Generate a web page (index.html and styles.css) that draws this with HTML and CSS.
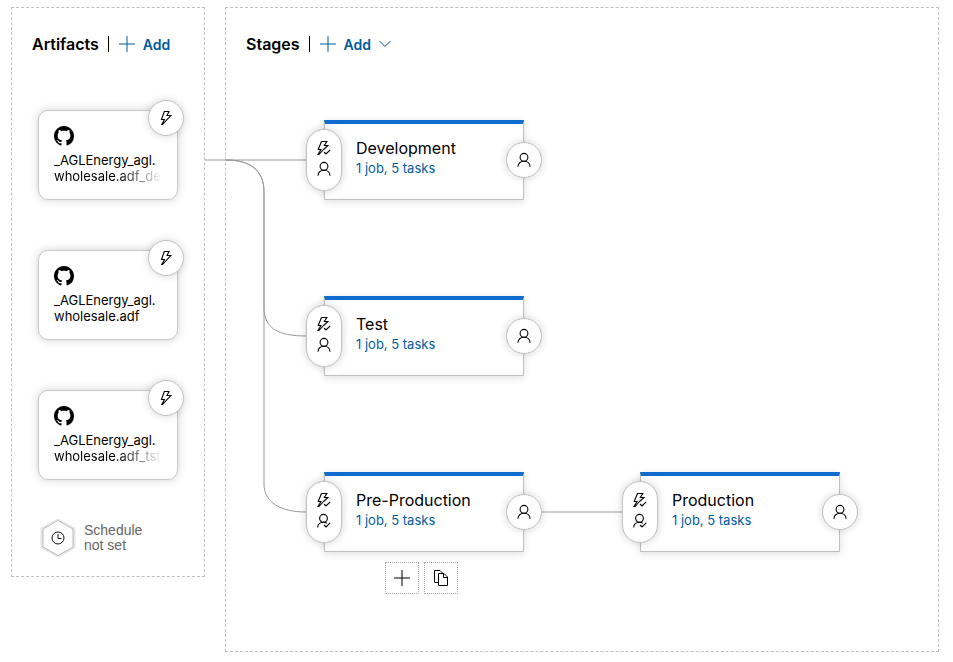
FILE: index.html
```html
<!DOCTYPE html>
<html lang="en">
<head>
<meta charset="utf-8">
<title>Release pipeline</title>
<link rel="stylesheet" href="styles.css">
</head>
<body>
<svg class="defs" aria-hidden="true">
  <symbol id="plus" viewBox="0 0 16 16"><path d="M8 0v16M0 8h16"/></symbol>
  <symbol id="bolt" viewBox="0 0 16 16"><path d="M6.300 1.500H11L9 5.500H12.800L4.500 14.500H3.800L6.500 9.500H3.500z"/></symbol>
  <symbol id="bolt-check" viewBox="0 0 16 16"><path d="M7.500 9.500L12 5.500H8.300L10.800 1.500H5.500L2.200 9.500H5L2 14.500H3L7.500 9.500M8 12l2 2 4.200-4.200"/></symbol>
  <symbol id="person" viewBox="0 0 16 16"><circle cx="8" cy="5.300" r="3.900"/><path d="M2 14.800c0-3.300 2.500-5.600 6-5.600s6 2.300 6 5.600"/></symbol>
  <symbol id="person-check" viewBox="0 0 16 16"><circle cx="7.500" cy="5.300" r="3.900"/><path d="M1.700 14.500c0-3 2.300-5.300 5.800-5.300 1.500 0 2.500.5 3.300 1M8 12l2 2 4.200-4.200"/></symbol>
  <symbol id="github" viewBox="0 0 16 16"><path d="M8 0C3.580 0 0 3.580 0 8c0 3.540 2.290 6.530 5.470 7.590.4.070.55-.17.55-.38 0-.19-.01-.82-.01-1.490-2.010.37-2.530-.49-2.690-.94-.09-.23-.48-.94-.82-1.130-.28-.15-.68-.52-.01-.53.63-.01 1.080.58 1.230.82.72 1.210 1.870.87 2.330.66.07-.52.28-.87.51-1.070-1.780-.2-3.640-.89-3.640-3.950 0-.87.31-1.590.82-2.150-.08-.2-.36-1.020.08-2.120 0 0 .67-.21 2.200.82.64-.18 1.320-.27 2-.27s1.360.09 2 .27c1.530-1.040 2.200-.82 2.200-.82.44 1.100.16 1.920.08 2.120.51.56.82 1.270.82 2.150 0 3.070-1.870 3.750-3.650 3.950.29.25.54.73.54 1.480 0 1.070-.01 1.930-.01 2.200 0 .21.15.46.55.38A8.010 8.010 0 0 0 16 8c0-4.420-3.580-8-8-8z"/></symbol>
</svg>
<main class="pipeline">
  <section class="panel artifacts">
    <header class="panel-header">
      <h2>Artifacts</h2>
      <button class="add"><svg class="icon"><use href="#plus"/></svg>Add</button>
    </header>
    <div class="artifact-list">
      <article class="artifact">
        <svg class="logo"><use href="#github"/></svg>
        <p>_AGLEnergy_agl.</p>
        <p class="fade">wholesale.adf_dev</p>
        <button class="round trigger" aria-label="Continuous deployment trigger"><svg class="icon"><use href="#bolt"/></svg></button>
      </article>
      <article class="artifact">
        <svg class="logo"><use href="#github"/></svg>
        <p>_AGLEnergy_agl.</p>
        <p>wholesale.adf</p>
        <button class="round trigger" aria-label="Continuous deployment trigger"><svg class="icon"><use href="#bolt"/></svg></button>
      </article>
      <article class="artifact">
        <svg class="logo"><use href="#github"/></svg>
        <p>_AGLEnergy_agl.</p>
        <p class="fade">wholesale.adf_tst</p>
        <button class="round trigger" aria-label="Continuous deployment trigger"><svg class="icon"><use href="#bolt"/></svg></button>
      </article>
    </div>
    <button class="schedule">
      <svg class="hexagon" viewBox="0 0 36 40">
        <path class="halo" d="M18 2L34 11V29L18 38L2 29V11z"/>
        <path class="edge" d="M18 2.500L33 11V29L18 37.500L3 29V11z"/>
        <circle cx="18" cy="20" r="6"/>
        <path d="M18 16v4.500h3.500"/>
      </svg>
      <span>Schedule<br>not set</span>
    </button>
  </section>

  <section class="panel stages">
    <svg class="connectors" aria-hidden="true">
      <path d="M0 152H110M21 152C45 152 59 162 59 184V300C59 320 73 328 101 328"/>
      <path d="M21 152C45 152 59 162 59 184V476C59 494 75 504 101 504M330 504H420"/>
    </svg>
    <header class="panel-header">
      <h2>Stages</h2>
      <button class="add"><svg class="icon"><use href="#plus"/></svg>Add<svg class="chevron" viewBox="0 0 12 8"><path d="M.5 1L6 6.500 11.500 1"/></svg></button>
    </header>
    <div class="stage-grid">
      <article class="stage first">
        <h3>Development</h3><a href="#">1 job, 5 tasks</a>
        <button class="pill" aria-label="Pre-deployment conditions"><svg class="icon"><use href="#bolt-check"/></svg><svg class="icon"><use href="#person"/></svg></button>
        <button class="round post" aria-label="Post-deployment conditions"><svg class="icon"><use href="#person"/></svg></button>
      </article>
      <article class="stage first">
        <h3>Test</h3><a href="#">1 job, 5 tasks</a>
        <button class="pill" aria-label="Pre-deployment conditions"><svg class="icon"><use href="#bolt-check"/></svg><svg class="icon"><use href="#person"/></svg></button>
        <button class="round post" aria-label="Post-deployment conditions"><svg class="icon"><use href="#person"/></svg></button>
      </article>
      <article class="stage first">
        <h3>Pre-Production</h3><a href="#">1 job, 5 tasks</a>
        <button class="pill" aria-label="Pre-deployment conditions"><svg class="icon"><use href="#bolt-check"/></svg><svg class="icon"><use href="#person-check"/></svg></button>
        <button class="round post" aria-label="Post-deployment conditions"><svg class="icon"><use href="#person"/></svg></button>
      </article>
      <article class="stage">
        <h3>Production</h3><a href="#">1 job, 5 tasks</a>
        <button class="pill" aria-label="Pre-deployment conditions"><svg class="icon"><use href="#bolt-check"/></svg><svg class="icon"><use href="#person-check"/></svg></button>
        <button class="round post" aria-label="Post-deployment conditions"><svg class="icon"><use href="#person"/></svg></button>
      </article>
    </div>
    <div class="stage-actions">
      <button aria-label="Add stage"><svg class="icon"><use href="#plus"/></svg></button>
      <button aria-label="Clone stage"><svg class="copy" viewBox="0 0 16 18"><path d="M5 13.500H1.500V1.500H7L9.500 4M5.500 4.500H11L14.500 8V16.500H5.500zM10.500 4.500V8.500H14.500"/></svg></button>
    </div>
  </section>
</main>
</body>
</html>
```
FILE: styles.css
```css
* { box-sizing: border-box; }
body { margin: 0; background: #fff; color: #000; font-family: Inter, "Noto Sans", sans-serif; }
h2, h3, p { margin: 0; }
button { margin: 0; padding: 0; border: 0; background: none; color: inherit; font: inherit; cursor: pointer; }
svg { display: block; flex: none; fill: none; stroke: currentColor; }
.defs { position: absolute; width: 0; height: 0; }

.pipeline { display: flex; align-items: flex-start; gap: 20px; padding: 7px 14px 10px 11px; }
.panel { border: 1px dashed #c0c0c0; padding: 20px; }
.artifacts { flex: none; width: 194px; padding-bottom: 18px; }
.stages { position: relative; flex: 1; min-height: calc(100vh - 17px); }

.panel-header { display: flex; align-items: center; height: 32px; }
h2 { font-size: 16px; line-height: 16px; font-weight: 600; padding-right: 9px; border-right: 1px solid #000; }
.add { display: flex; align-items: center; gap: 8px; margin-left: 10px; color: #005a9e; font-size: 14px; font-weight: 600; }
.icon { width: 16px; height: 16px; }
.round .icon, .pill .icon { stroke-width: 1.1; }
.chevron { width: 12px; height: 8px; }

.artifact-list { display: grid; grid-template-columns: minmax(0, 1fr); gap: 50px; margin: 50px 6px 0; }
.artifact { position: relative; height: 90px; padding: 15px; border: 1px solid #c8c8c8; border-radius: 10px; background: #fff; box-shadow: 0 0 10px rgba(0, 0, 0, .18); }
.logo { width: 20px; height: 20px; margin-bottom: 6px; fill: #000; stroke: none; }
.artifact p { overflow: hidden; white-space: nowrap; font-size: 13px; line-height: 16px; }
.artifact .fade { -webkit-mask-image: linear-gradient(90deg, #000 60%, transparent); mask-image: linear-gradient(90deg, #000 60%, transparent); }

.round { display: grid; place-items: center; width: 36px; height: 36px; border: 1px solid #c0c0c0; border-radius: 50%; background: #fff; box-shadow: 0 0 8px rgba(0, 0, 0, .16); }
.trigger { position: absolute; top: -11px; right: -7px; }

.schedule { display: flex; align-items: center; gap: 8px; margin: 38px 0 0 8px; text-align: left; color: #666; font-family: "Liberation Sans", Arial, sans-serif; font-size: 14px; line-height: 15px; }
.hexagon { width: 36px; height: 40px; color: #111; }
.halo { stroke: #e6e6e6; stroke-width: 3px; }
.edge { stroke: #bbb; fill: #fff; }

.connectors { position: absolute; top: 0; left: -21px; width: 100%; height: 100%; stroke: #999; }
.stage-grid { display: grid; grid-template-columns: 200px 200px; gap: 96px 116px; margin: 60px 0 0 78px; }
.first { grid-column: 1; }
.stage { position: relative; height: 80px; padding: 14px 31px; border: 1px solid #c0c0c0; border-top: 4px solid #106ccf; background: #fff; box-shadow: 0 2px 8px rgba(0, 0, 0, .13); }
.stage h3 { font-size: 16px; line-height: 20px; font-weight: 400; }
.stage a { display: block; color: #005a9e; font-size: 13px; line-height: 20px; text-decoration: none; }
.pill { position: absolute; top: 5px; left: -19px; display: flex; flex-direction: column; align-items: center; justify-content: center; gap: 5px; width: 36px; height: 62px; padding-bottom: 3px; border: 1px solid #c0c0c0; border-radius: 18px; background: #fff; box-shadow: 0 0 8px rgba(0, 0, 0, .18); }
.post { position: absolute; top: 18px; right: -19px; }

.stage-actions { display: flex; gap: 5px; margin: 10px 0 0 139px; }
.stage-actions button { display: grid; place-items: center; width: 34px; height: 32px; border: 1px dotted #aaa; }
.copy { width: 16px; height: 18px; }
```
